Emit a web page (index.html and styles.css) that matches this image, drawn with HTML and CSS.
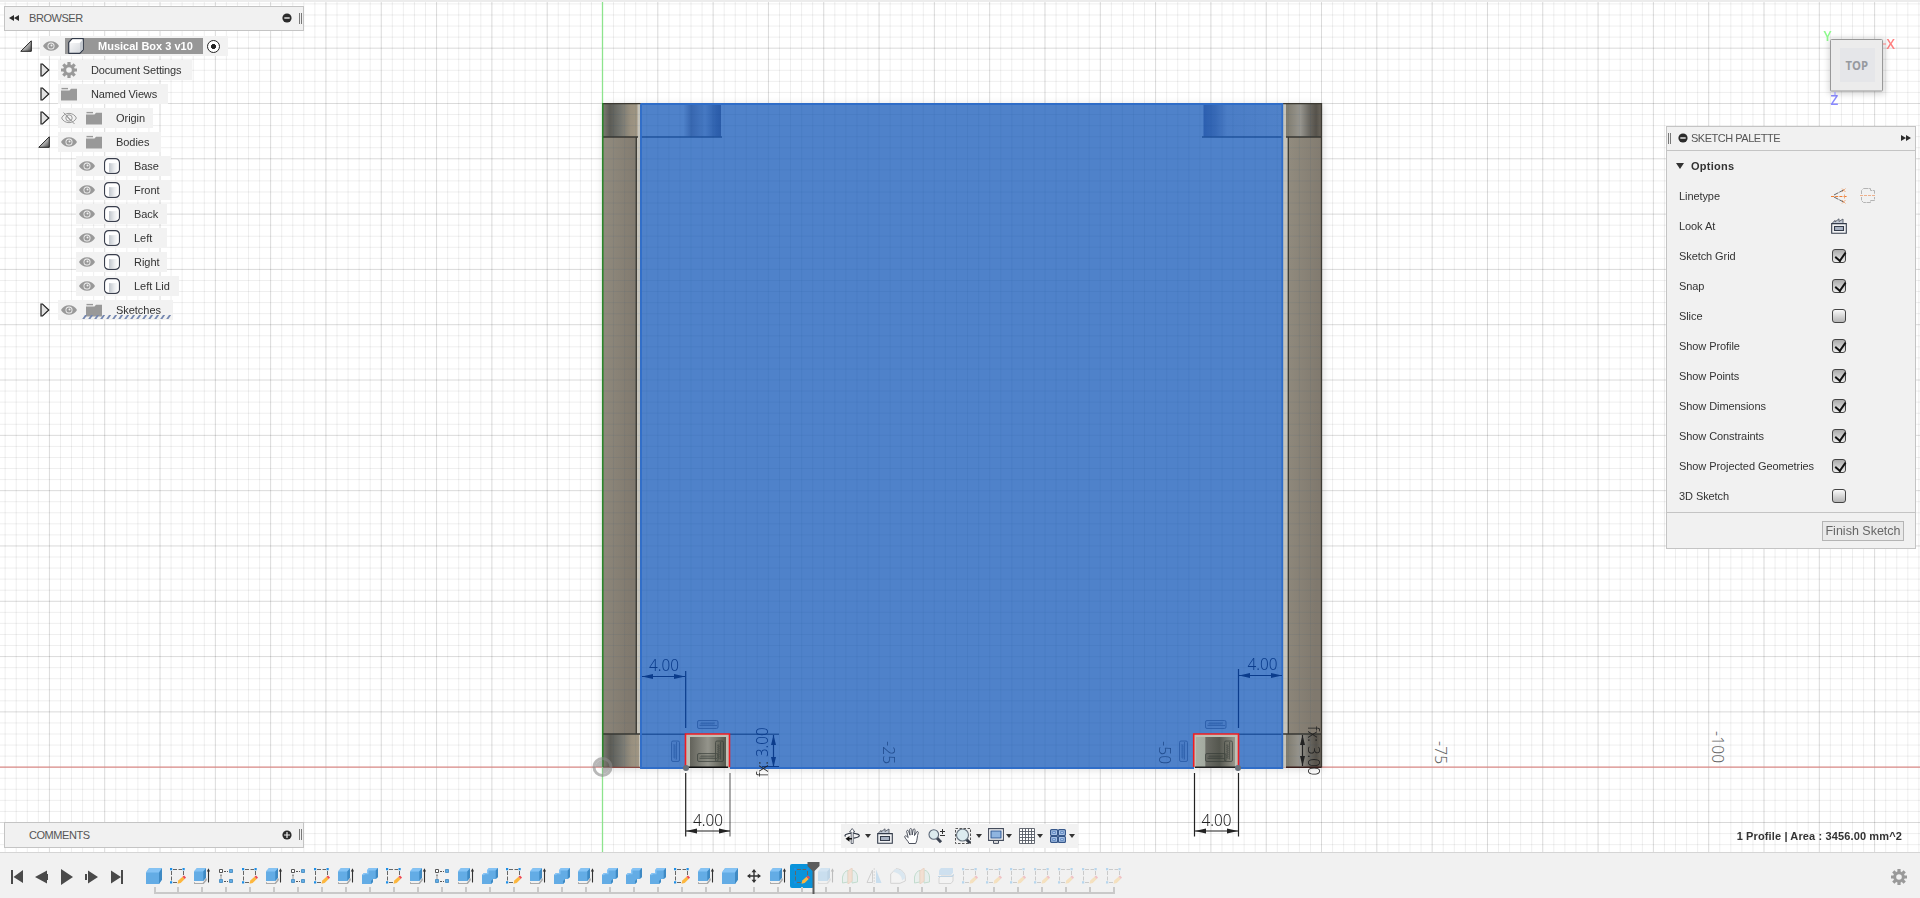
FILE: index.html
```html
<!DOCTYPE html>
<html lang="en">
<head>
<meta charset="utf-8">
<title>Musical Box 3 v10</title>
<link rel="stylesheet" href="styles.css">
</head>
<body>
<svg class="defs" aria-hidden="true">
  <defs>
    <linearGradient id="gTri" x1="0" y1="0" x2="1" y2="1"><stop offset=".3" stop-color="#eee"/><stop offset="1" stop-color="#444"/></linearGradient>
    <linearGradient id="gCyl"><stop offset="0" stop-color="#fff"/><stop offset=".25" stop-color="#fff"/><stop offset=".3" stop-color="#c3c8ce"/><stop offset=".7" stop-color="#eceef0"/><stop offset="1" stop-color="#fff"/></linearGradient>
    <linearGradient id="gBox" x1="0" y1="0" x2="1" y2="1"><stop offset="0" stop-color="#fff"/><stop offset="1" stop-color="#cfd3d8"/></linearGradient>
    <symbol id="eye" viewBox="0 0 16 16"><path d="M0 8C3 1.600 13 1.600 16 8C13 14.400 3 14.400 0 8Z" fill="#999"/><circle cx="8" cy="8" r="3.500" fill="#f2f2f2"/><circle cx="8" cy="8" r="2.600" fill="#999"/><circle cx="8.500" cy="7.500" r="1" fill="#f2f2f2"/></symbol>
    <symbol id="eyeoff" viewBox="0 0 16 16"><g fill="none" stroke="#999"><path d="M.6 8C3.500 1.800 12.500 1.800 15.400 8C12.500 14.200 3.500 14.200.6 8Z"/><circle cx="8" cy="8" r="3.200"/><path d="M2.500 2.500l11 11.500M5.500 6l4 4.500" /></g></symbol>
    <symbol id="folder" viewBox="0 0 16 16"><path d="M0 4.500h8.500l1.500-1.800h6v11.800H0Z" fill="#999"/><path d="M.5 2.600h6.500" stroke="#999" stroke-width="1.400"/></symbol>
    <symbol id="gear" viewBox="0 0 16 16"><circle cx="8" cy="8" r="4.300" fill="none" stroke="#999" stroke-width="3"/><g stroke="#999" stroke-width="3.200"><path d="M8 0v3M8 13v3M0 8h3M13 8h3M2.300 2.300l2 2M11.700 11.700l2 2M2.300 13.700l2-2M11.700 4.300l2-2"/></g></symbol>
    <symbol id="body" viewBox="0 0 16 16"><rect x=".6" y=".6" width="14.800" height="14.800" rx="4" fill="#fff" stroke="#3a3f4d" stroke-width="1.200"/><path d="M1.500 4.500Q8 6 14.500 4.500v8Q13 14.500 8 14.500T1.500 12.500Z" fill="url(#gCyl)"/></symbol>
    <symbol id="comp" viewBox="0 0 16 16"><path d="M.7 4.500L4.200.700H15.300V11.500L11.800 15.300H.7Z" fill="url(#gBox)" stroke="#333b4a" stroke-width="1.200" stroke-linejoin="round"/><path d="M1.500 5L4.600 1.400H14.400L11.500 5Z" fill="#fff"/><path d="M12 5L14.800 2v9.200L12 14.300Z" fill="#c4c9d0"/></symbol>
    <symbol id="open" viewBox="0 0 12 12"><path d="M.8 11.300L11.300.800V11.300Z" fill="url(#gTri)" stroke="#222" stroke-width="1"/></symbol>
    <symbol id="shut" viewBox="0 0 10 14"><path d="M1 1H2.500L8.800 7L2.500 13H1Z" fill="#e2e2e2" stroke="#222" stroke-width="1.200"/></symbol>
    <symbol id="minus" viewBox="0 0 10 10"><circle cx="5" cy="5" r="4.600" fill="#2b2b2b"/><path d="M2.300 5h5.400" stroke="#f0f0f0" stroke-width="1.400"/></symbol>
    <symbol id="plus" viewBox="0 0 10 10"><circle cx="5" cy="5" r="4.600" fill="#2b2b2b"/><path d="M2 5h6M5 2v6" stroke="#f0f0f0" stroke-width="1.200"/></symbol>
    <symbol id="ff" viewBox="0 0 10 6"><path d="M0 0l5 3-5 3ZM5 0l5 3-5 3Z" fill="#2b2b2b"/></symbol>
    <symbol id="lookat" viewBox="0 0 16 16"><path d="M1 5.500L4 2.300V4L8 .800V3.500L12 1V4.500L13 5.500Z" fill="#c3cad6" stroke="#555b68" stroke-width=".9"/><path d="M.7 5.600H15.300V15.300H.7Z" fill="#f3f4f6" stroke="#333b4a" stroke-width="1.100"/><path d="M3.500 8.500H12.500V12.500H3.500Z" fill="#a9b3c4" stroke="#333b4a" stroke-width="1.100"/></symbol>
    <symbol id="constr" viewBox="0 0 16 16"><path d="M3 7L13.500 1.500M3 9L13.500 14.500" stroke="#666" fill="none" stroke-dasharray="5 1"/><path d="M0 8.500h16" stroke="#ef7d32" stroke-width="1.200" stroke-dasharray="3 1.200"/><path d="M11 .5l3.500 3.500M14.500.5l-3.500 3.500M11 12l3.500 3.500M14.500 12l-3.500 3.500M13.500 6.500v4" stroke="#ef9c66" stroke-width=".8"/></symbol>
    <symbol id="center" viewBox="0 0 16 16"><path d="M3.500.5H10.500V2.500H14.500V12.500H10.500V14.500H3.500L1.500 12.500V2.500Z" fill="none" stroke="#b4b4b4" stroke-dasharray="5 .6"/><path d="M1 7.500H15" stroke="#f1f1f1" stroke-width="3"/><path d="M0 7.500h16" stroke="#edb08c" stroke-dasharray="3 1"/></symbol>
    <symbol id="orbit" viewBox="0 0 16 16"><path d="M1.500 8.500C-.5 6.500 4 5.300 8 5.300S16.500 6.500 15 8.300C14 9.700 11 10 9.500 10.200" fill="none" stroke="#2e3542" stroke-width="1.100"/><path d="M7.200 15.500V4H5.500L8.200.500 10.800 4H9.200V15.500Z" fill="#fff" stroke="#3b4350" stroke-width=".8"/><path d="M1.500 10.800L5.500 8v2H8v1.600H5.500v2.200Z" fill="#111"/></symbol>
    <symbol id="hand" viewBox="0 0 16 16"><path d="M5 15.500C4 12.500 1 10.800.6 8.500C1.500 7 3 8.500 4.200 9.600L2.600 3.300C3 1.800 4.300 2.200 4.700 3.400L6 7.200 5.700 1.400C6.200.1 7.500.3 7.800 1.600L8.200 7 9.200 1.600C10 .6 11.200 1 11.100 2.300L10.500 7.500 12.700 3.800C13.700 3.100 14.700 3.900 14.200 5.100C13 8 13.600 12 11.700 15.500Z" fill="#fff" stroke="#434955" stroke-width=".95"/></symbol>
    <symbol id="zoomi" viewBox="0 0 18 16"><path d="M8.500 9.500L13 14.200" stroke="#3c4452" stroke-width="3"/><circle cx="5.800" cy="6.500" r="4.800" fill="#dcebef" stroke="#5c6878" stroke-width="1.100"/><path d="M12 3.500h5M14.500 1v5M12 7.500h5" stroke="#333" stroke-width="1"/></symbol>
    <symbol id="zoomw" viewBox="0 0 16 16"><path d="M.5.500H15.500V15.500H.5Z" fill="none" stroke="#555" stroke-dasharray="2.500 1.500"/><path d="M11 11L15 15" stroke="#343c4a" stroke-width="3"/><circle cx="7.500" cy="7" r="6" fill="#dcebef" stroke="#68747f" stroke-width="1.100"/></symbol>
    <symbol id="disp" viewBox="0 0 16 16"><path d="M.6.600H15.400V12.400H.6Z" fill="#fff" stroke="#444c5c" stroke-width="1.100"/><path d="M3 3h10v7H3Z" fill="#8fb4e0" stroke="#365d96" stroke-width="1.100"/><path d="M5.500 12.500h5V15.400h-5Z" fill="#ddd" stroke="#444c5c"/></symbol>
    <symbol id="gridi" viewBox="0 0 16 16"><path d="M.5.500H15.500V15.500H.5Z" fill="#fff"/><path d="M.5.500H15.500V15.500H.5ZM3.500.500v15M6.500.500v15M9.500.500v15M12.500.500v15M.5 3.500h15M.5 6.500h15M.5 9.500h15M.5 12.500h15" fill="none" stroke="#565b65" stroke-width=".9"/></symbol>
    <symbol id="views" viewBox="0 0 16 14"><g fill="#a9c3e6" stroke="#36578a" stroke-width="1.200"><rect x=".6" y=".6" width="7" height="6" rx="1"/><rect x="8.400" y=".6" width="7" height="6" rx="1"/><rect x=".6" y="7.400" width="7" height="6" rx="1"/><rect x="8.400" y="7.400" width="7" height="6" rx="1"/></g><path d="M2.500 2.500h3v2h-3ZM10.500 2.500h3v2h-3ZM2.500 9.500h3v2h-3ZM10.500 9.500h3v2h-3Z" fill="none" stroke="#6b91c7"/></symbol>
    <symbol id="t-box" viewBox="0 0 16 16"><path d="M0 4.500L3 .3H16V11.500L13 16H0Z" fill="#63ace5"/><path d="M0 4.500L3 .3H16L13 4.500Z" fill="#85c3f5"/><path d="M13 4.500L16 .3V11.500L13 16Z" fill="#3f8ac4"/></symbol>
    <symbol id="t-extrude" viewBox="0 0 16 16"><path d="M0 14v1.700H9L12 12V10.500" fill="none" stroke="#aaa" stroke-width="1.600"/><path d="M0 3.500L2.800.300H12V9.500L9.300 13H0Z" fill="#63ace5"/><path d="M0 3.500L2.800.300H12L9.300 3.500Z" fill="#85c3f5"/><path d="M9.300 3.500L12 .3V9.500L9.300 13Z" fill="#3f8ac4"/><path d="M14.500 14.500V2" stroke="#333" stroke-width="1.100"/><path d="M12.800 3.500L14.500.300L16 3.500Z" fill="#333"/></symbol>
    <symbol id="t-sketch" viewBox="0 0 16 16"><path d="M3 1.500H12M1.500 3V13M13.500 3V8M3 14.500H8" fill="none" stroke="#666" stroke-dasharray="4 1.500"/><path d="M0 0h2.200v2.200H0ZM12.500 0h2.200v2.200h-2.200ZM0 13.300h2.200v2.200H0Z" fill="#1d8fe8"/><path d="M7.500 15.700L8.300 12.500 12.500 8.700 14.700 11 10.700 15Z" fill="#fdb73e"/><path d="M12.500 8.700L14 7.500 16 9.500 14.700 11Z" fill="#ef4752"/></symbol>
    <symbol id="t-pattern" viewBox="0 0 16 16"><path d="M6 3.500h4M3 6.500v4M6 13.500h4" stroke="#555" stroke-width="1.100" stroke-dasharray="2 1"/><path d="M1.500 1.500h3v3h-3Z" fill="#fff" stroke="#555"/><path d="M11.500 1.500h3v3h-3ZM1.500 11.500h3v3h-3ZM11.500 11.500h3v3h-3Z" fill="#63ace5" stroke="#3c86be" stroke-width=".8"/></symbol>
    <symbol id="t-combine" viewBox="0 0 16 16"><path d="M0 7L2 5H5V2.200L7 0H16V9L13.700 11H11V14L9 16H0Z" fill="#63ace5"/><path d="M0 7L2 5H5V2.200L7 0H16L13.700 2.500H6.500V6.300H3L2 7.200Z" fill="#85c3f5"/><path d="M13.700 2.500L16 0V9L13.700 11ZM9 13L11 11V14L9 16Z" fill="#3f8ac4"/></symbol>
    <symbol id="t-move" viewBox="0 0 16 16"><path d="M8 2v12M2 8h12" stroke="#333" stroke-width="1.400"/><path d="M8 1l2.500 3.300H5.500ZM8 15l2.500-3.300H5.500ZM1 8l3.300-2.500v5ZM15 8l-3.300-2.500v5Z" fill="#333"/></symbol>
    <symbol id="t-loft" viewBox="0 0 16 16"><path d="M.5 15V9Q2 3 6 2.500V14Z" fill="#d5e9e2" stroke="#4ba574"/><path d="M10 2Q15 3 15.500 9V14L10 15Z" fill="#c9e7e0" stroke="#4ba574"/><path d="M6 3L10 0V13L6 16Z" fill="#f4b183" stroke="#dc8955"/></symbol>
    <symbol id="t-mirror" viewBox="0 0 16 16"><path d="M6.500 2V14.500H1Z" fill="none" stroke="#777"/><path d="M10 1.500V15H15.500Z" fill="#63ace5"/><path d="M8.200 0V16" stroke="#999" stroke-dasharray="2 1"/></symbol>
    <symbol id="t-fillet" viewBox="0 0 16 16"><path d="M.7 6L6 .7C12 1 15.300 5 15.300 10V13L10 15.300H.7Z" fill="#f6f6f6" stroke="#888"/><path d="M5.500 1C11 1 15 4.500 15.300 10L12 12.500C12 8 8.500 4.500 3 4Z" fill="#9fcbee"/></symbol>
    <symbol id="t-split" viewBox="0 0 16 16"><path d="M1 2.500L3 0H15V4.500L13 7H1Z" fill="#72b5e8"/><path d="M1 10L3 8H15V13L13 15.500H1Z" fill="#f7f7f7" stroke="#8b8b8b"/><path d="M0 8.500h14l2-2" stroke="#3f8ac4" fill="none" stroke-width="1.200"/></symbol>
    <symbol id="hz" viewBox="0 0 22 9"><rect x=".5" y=".5" width="20.500" height="8" rx="1.500" fill="currentColor" fill-opacity=".1" stroke="currentColor" stroke-width=".9"/><path d="M2.500 5.500H20M3 4.500l2-2v2l2-2v2l2-2v2l2-2v2l2-2v2l2-2v2l2-2v2" fill="none" stroke="currentColor" stroke-width=".8"/></symbol>
  </defs>
</svg>

<main class="viewport">
  <svg class="scene" width="1920" height="852" viewBox="0 0 1920 852">
    <defs>
      <linearGradient id="postL"><stop offset="0" stop-color="#7d7b71"/><stop offset=".2" stop-color="#5c5c56"/><stop offset=".5" stop-color="#74756f"/><stop offset=".8" stop-color="#99907f"/><stop offset="1" stop-color="#a09684"/></linearGradient>
      <linearGradient id="postR"><stop offset="0" stop-color="#7f7b6e"/><stop offset=".4" stop-color="#98968f"/><stop offset=".65" stop-color="#6c6962"/><stop offset=".85" stop-color="#56524b"/><stop offset="1" stop-color="#6c675d"/></linearGradient>
      <linearGradient id="wallL" x1="0" y1="0" x2="1" y2=".4"><stop offset="0" stop-color="#928c7f"/><stop offset="1" stop-color="#80796e"/></linearGradient>
      <linearGradient id="peg"><stop offset="0" stop-color="#63635b"/><stop offset=".5" stop-color="#94948b"/><stop offset="1" stop-color="#55564b"/></linearGradient>
      <linearGradient id="pegR"><stop offset="0" stop-color="#aab1a6"/><stop offset=".23" stop-color="#a4aaa0"/><stop offset=".25" stop-color="#6b6c65"/><stop offset=".6" stop-color="#55574f"/><stop offset="1" stop-color="#98968b"/></linearGradient>
      <linearGradient id="tabL"><stop offset="0" stop-color="#4f82ca"/><stop offset=".53" stop-color="#4f82ca"/><stop offset=".63" stop-color="#3867b0"/><stop offset=".8" stop-color="#4679c3"/><stop offset=".94" stop-color="#2f61ae"/><stop offset="1" stop-color="#2a5ba8"/></linearGradient>
      <linearGradient id="tabR"><stop offset="0" stop-color="#2c5fb0"/><stop offset=".15" stop-color="#3769b6"/><stop offset=".3" stop-color="#4b7dc6"/><stop offset="1" stop-color="#5082c9"/></linearGradient>
      <filter id="soft" x="-5%" y="-5%" width="110%" height="110%"><feGaussianBlur stdDeviation="4"/></filter>
    </defs>
    <rect width="1920" height="852" fill="#fff"/>
    <path class="minor" data-grid="minor"/>
    <path class="major" data-grid="major"/>
    <path d="M0 767.200H1920" stroke="#df8f8c" stroke-width="1.300"/>
    <path d="M602.500 2V852" stroke="#8de48d" stroke-width="1.300"/>
    <rect x="603" y="105" width="720" height="664" fill="#000" opacity=".15" filter="url(#soft)"/>
    <g>
      <rect x="602.500" y="103.500" width="719" height="664" fill="#c5c3ba"/>
      <rect x="603" y="137" width="33" height="597" fill="url(#wallL)"/>
      <rect x="1288" y="137" width="33.500" height="597" fill="url(#wallL)"/>
      <rect x="603" y="104" width="34.500" height="33" fill="url(#postL)"/>
      <rect x="603" y="734" width="36" height="33" fill="url(#postL)"/>
      <rect x="1286" y="104" width="35.500" height="33" fill="url(#postR)"/>
      <rect x="1286" y="734" width="35.500" height="33" fill="url(#postR)"/>
      <path d="M636.300 137V734M1288.300 137V734M603 137H638M1286 137H1321.500M603 734H640M1283 734H1321.500M603 103.600H1321.500M1321.500 103V767.500" fill="none" stroke="#3b3932" stroke-width="1.300"/>
      <path d="M602.800 103V767" stroke="#1f7f1e" stroke-width="1.400"/>
      <path d="M603 767.300H640" stroke="#7b312b"/><path d="M1286 767.300H1321.500" stroke="#3a1d1a" stroke-width="1.400"/>
      <path d="M640 103.500H1283V768.500H1238.500V734H1193.500V768.500H730V734H685.500V768.500H640Z" fill="#4f82ca"/>
      <rect x="641" y="104.500" width="80" height="32.500" fill="url(#tabL)"/>
      <rect x="1203.500" y="104.500" width="79" height="32.500" fill="url(#tabR)"/>
      <path d="M641 137H722M1202 137H1282M641 734.300H686M730 734.300H779M1238 734.300H1282" stroke="#2355a0" stroke-width="1.500"/>
      <path class="through" data-grid="box"/>
      <path d="M641 104V768H686M730 768H1194M1238 768H1282.300V104H641" fill="none" stroke="#2f6dc8" stroke-width="1.800"/>
    </g>
    <g>
      <rect x="686" y="734" width="44" height="33.500" fill="#bfc0b5"/><rect x="690" y="737" width="36" height="30" fill="url(#peg)"/>
      <path d="M688 767.300H728" stroke="#111" stroke-width="1.500"/>
      <path d="M685.500 767V734H729.500V767" fill="none" stroke="#f11c22" stroke-width="1.600"/>
      <rect x="1194" y="734" width="44" height="33.500" fill="#bfc0b5"/><rect x="1196" y="737" width="39" height="30" fill="url(#pegR)"/>
      <path d="M1195 767.300H1238" stroke="#222" stroke-width="1.400"/>
      <path d="M1193.700 767V734H1238.500V767" fill="none" stroke="#f11c22" stroke-width="1.600"/>
      <circle cx="686" cy="768" r="3" fill="#67707a"/><circle cx="1238" cy="768" r="3" fill="#67707a"/>
    </g>
    <g color="#1d4f9c" opacity=".7">
      <use href="#hz" x="697" y="720" width="22" height="9"/><use href="#hz" x="1205" y="720" width="22" height="9"/>
      <use href="#hz" width="22" height="9" transform="translate(671 762) rotate(-90)"/>
      <use href="#hz" width="22" height="9" transform="translate(1179 762) rotate(-90)"/>
    </g>
    <g color="#333a35" opacity=".7">
      <use href="#hz" x="697" y="753" width="22" height="9"/><use href="#hz" x="1205" y="753" width="22" height="9"/>
      <use href="#hz" width="22" height="9" transform="translate(715 762) rotate(-90)"/>
      <use href="#hz" width="22" height="9" transform="translate(1224 762) rotate(-90)"/>
    </g>
    <g class="dim-blue">
      <path d="M685.700 671V728M642 676.500H685M1238.500 669V728M1239 675.500H1282M773.500 735V767M762 766.500H779"/>
      <path class="head" d="M642 676.500l11-2.500v5ZM685 676.500l-11-2.500v5ZM1239 675.500l11-2.500v5ZM1282 675.500l-11-2.500v5ZM773.500 735l-2.500 10h5ZM773.500 767l-2.500-10h5Z"/>
      <text x="649" y="671" textLength="30" lengthAdjust="spacingAndGlyphs">4.00</text>
      <text x="1247.500" y="670" textLength="30" lengthAdjust="spacingAndGlyphs">4.00</text>
      <text transform="translate(768 757) rotate(-90)" textLength="29.500" lengthAdjust="spacingAndGlyphs">3.00</text>
    </g>
    <g class="dim-dark">
      <path d="M685.700 773V836.500M1194.500 773V836.500M1238.500 773V836.500M686 831H730M1195 831H1238M1302.500 735V766"/>
      <path d="M730 773V836.500" opacity=".65"/>
      <path class="head" d="M686 831l11-2.500v5ZM730 831l-11-2.500v5ZM1195 831l11-2.500v5ZM1238 831l-11-2.500v5ZM1302.500 735l-2.500 10h5ZM1302.500 766l-2.500-10h5Z"/>
      <text x="693" y="825.500" textLength="30" lengthAdjust="spacingAndGlyphs">4.00</text>
      <text x="1201.500" y="825.500" textLength="30" lengthAdjust="spacingAndGlyphs">4.00</text>
      <text transform="translate(768 777) rotate(-90)" textLength="16" lengthAdjust="spacingAndGlyphs">fx:</text>
      <text transform="translate(1308 726) rotate(90)" textLength="49.500" lengthAdjust="spacingAndGlyphs">fx: 3.00</text>
    </g>
    <g class="ruler">
      <text class="in" transform="translate(883 741) rotate(90)" textLength="23">-25</text>
      <text class="in" transform="translate(1159 741) rotate(90)" textLength="23">-50</text>
      <text transform="translate(1435 741) rotate(90)" textLength="23">-75</text>
      <text transform="translate(1711.500 731) rotate(90)" textLength="32">-100</text>
    </g>
    <circle cx="602.500" cy="767" r="8.500" fill="none" stroke="#888" stroke-opacity=".6" stroke-width="3"/>
    <path d="M602.500 767V760a7 7 0 0 0-7 7ZM602.500 767v7a7 7 0 0 0 7-7Z" fill="#888" fill-opacity=".6"/>
    <rect width="1920" height="2" fill="#ececec"/>
  </svg>

  <section class="browser">
    <header class="bar">
      <svg class="ff flip"><use href="#ff"/></svg><span class="bar-title">BROWSER</span>
      <svg class="knob"><use href="#minus"/></svg><i class="grip"></i>
    </header>
    <ul class="tree">
      <li class="root"><svg class="tri"><use href="#open"/></svg><div class="chip w-root"><svg class="ic"><use href="#eye"/></svg><b class="active"><svg class="ic"><use href="#comp"/></svg>Musical Box 3 v10</b><i class="radio"></i></div></li>
      <li class="l1"><svg class="tri shut"><use href="#shut"/></svg><div class="chip w-doc"><svg class="ic"><use href="#gear"/></svg><span>Document Settings</span></div></li>
      <li class="l1"><svg class="tri shut"><use href="#shut"/></svg><div class="chip w-views"><svg class="ic"><use href="#folder"/></svg><span>Named Views</span></div></li>
      <li class="l1"><svg class="tri shut"><use href="#shut"/></svg><div class="chip w-origin"><svg class="ic"><use href="#eyeoff"/></svg><svg class="ic"><use href="#folder"/></svg><span>Origin</span></div></li>
      <li class="l1"><svg class="tri"><use href="#open"/></svg><div class="chip w-bodies"><svg class="ic"><use href="#eye"/></svg><svg class="ic"><use href="#folder"/></svg><span>Bodies</span></div></li>
      <li class="l2"><div class="chip w-m"><svg class="ic"><use href="#eye"/></svg><svg class="ic"><use href="#body"/></svg><span>Base</span></div></li>
      <li class="l2"><div class="chip w-m"><svg class="ic"><use href="#eye"/></svg><svg class="ic"><use href="#body"/></svg><span>Front</span></div></li>
      <li class="l2"><div class="chip w-s"><svg class="ic"><use href="#eye"/></svg><svg class="ic"><use href="#body"/></svg><span>Back</span></div></li>
      <li class="l2"><div class="chip w-s"><svg class="ic"><use href="#eye"/></svg><svg class="ic"><use href="#body"/></svg><span>Left</span></div></li>
      <li class="l2"><div class="chip w-s"><svg class="ic"><use href="#eye"/></svg><svg class="ic"><use href="#body"/></svg><span>Right</span></div></li>
      <li class="l2"><div class="chip w-l"><svg class="ic"><use href="#eye"/></svg><svg class="ic"><use href="#body"/></svg><span>Left Lid</span></div></li>
      <li class="l1"><svg class="tri shut"><use href="#shut"/></svg><div class="chip w-sk"><svg class="ic"><use href="#eye"/></svg><svg class="ic"><use href="#folder"/></svg><span>Sketches</span><svg class="hatch" viewBox="0 0 89 4"><path d="M0 2H89" stroke="#7487b0" stroke-width="4" stroke-dasharray="2.200 3.800" transform="skewX(-35) translate(3 0)"/></svg></div></li>
    </ul>
  </section>

  <section class="comments bar">
    <span class="bar-title">COMMENTS</span><svg class="knob"><use href="#plus"/></svg><i class="grip"></i>
  </section>

  <svg class="cube" width="80" height="90" viewBox="1820 25 80 90">
    <defs><filter id="cubeblur" x="-20%" y="-20%" width="140%" height="140%"><feGaussianBlur stdDeviation="3"/></filter></defs>
    <g class="axis"><text x="1823.500" y="41" fill="#8dfa8d">Y</text><text x="1886.500" y="48.500" fill="#ff8080">X</text><text x="1830.500" y="105" fill="#8a8aff">Z</text></g>
    <rect x="1829" y="39" width="56" height="55" fill="#000" opacity=".16" filter="url(#cubeblur)"/>
    <rect x="1830.500" y="39.500" width="52" height="51.500" rx="1" fill="#ececec" stroke="#999"/>
    <rect x="1840" y="48" width="35" height="34" fill="#e5e6e9"/>
    <text class="face" x="1845.500" y="70" textLength="22.500" lengthAdjust="spacingAndGlyphs">TOP</text>
    <path d="M1883 44h3" stroke="#ff8080"/><path d="M1835 92v4" stroke="#8a8aff"/>
  </svg>

  <section class="palette">
    <header><i class="grip"></i><svg class="knob"><use href="#minus"/></svg><span>SKETCH PALETTE</span><svg class="ff"><use href="#ff"/></svg></header>
    <h2><i class="caret"></i>Options</h2>
    <div class="opt"><span>Linetype</span><svg class="ic"><use href="#constr"/></svg><svg class="ic second"><use href="#center"/></svg></div>
    <div class="opt"><span>Look At</span><svg class="ic"><use href="#lookat"/></svg></div>
    <div class="opt"><span>Sketch Grid</span><i class="check on"></i></div>
    <div class="opt"><span>Snap</span><i class="check on"></i></div>
    <div class="opt"><span>Slice</span><i class="check"></i></div>
    <div class="opt"><span>Show Profile</span><i class="check on"></i></div>
    <div class="opt"><span>Show Points</span><i class="check on"></i></div>
    <div class="opt"><span>Show Dimensions</span><i class="check on"></i></div>
    <div class="opt"><span>Show Constraints</span><i class="check on"></i></div>
    <div class="opt"><span>Show Projected Geometries</span><i class="check on"></i></div>
    <div class="opt"><span>3D Sketch</span><i class="check"></i></div>
    <footer><button>Finish Sketch</button></footer>
  </section>

  <nav class="navbar">
    <svg class="ic"><use href="#orbit"/></svg><i class="caret c1"></i>
    <svg class="ic lk"><use href="#lookat"/></svg>
    <svg class="ic hd"><use href="#hand"/></svg>
    <svg class="ic zi"><use href="#zoomi"/></svg>
    <svg class="ic zw"><use href="#zoomw"/></svg><i class="caret c2"></i>
    <svg class="ic dp"><use href="#disp"/></svg><i class="caret c3"></i>
    <svg class="ic gr"><use href="#gridi"/></svg><i class="caret c3"></i>
    <svg class="ic vw"><use href="#views"/></svg><i class="caret c4"></i>
  </nav>
  <p class="status">1 Profile | Area : 3456.00 mm^2</p>
</main>

<footer class="timeline">
  <svg class="player" width="124" height="16" viewBox="0 0 124 16" fill="#4a4a4a">
    <path d="M0 1h2v14H0ZM12 1v13L2.500 8ZM36 1.500v13L24 8ZM35 5h2v6h-2ZM50 0L62 8L50 16ZM74 5h2v6h-2ZM77 1.500L87 8L77 14.500ZM100 1.500L110 8L100 14.500ZM110 1h2v14h-2Z"/>
  </svg>
  <div class="track"></div>
  <svg class="ic settings"><use href="#gear"/></svg>
</footer>
<script src="app.js"></script>
</body>
</html>
```

FILE: styles.css
```css
* { box-sizing: border-box; }
html, body { margin: 0; height: 100%; }
body { display: flex; flex-direction: column; height: 898px; overflow: hidden; background: #fff; color: #333; font: 11px/14px "Liberation Sans", Arial, sans-serif; }
.defs { position: absolute; width: 0; height: 0; }
svg { flex: none; display: block; }
.ic { width: 16px; height: 16px; }

.viewport { position: relative; flex: none; height: 852px; overflow: hidden; }
.minor { fill: none; stroke: #000; stroke-opacity: .065; }
.major { fill: none; stroke: #000; stroke-opacity: .085; }
.through { fill: none; stroke: #14407f; stroke-opacity: .06; }
.scene text { font-family: "Noto Sans", "Open Sans", sans-serif; font-weight: 300; font-size: 15.5px; }
.dim-blue path, .dim-dark path { fill: none; stroke: #0b3c8c; stroke-width: 1.2; }
.dim-dark path { stroke: #222; }
.dim-blue .head, .dim-blue text { fill: #0b3c8c; stroke: none; }
.dim-dark .head, .dim-dark text { fill: #222; stroke: none; }
.ruler text { fill: #666; }
.ruler .in { fill: #234f91; }

.bar { display: flex; align-items: center; width: 300px; height: 25px; padding: 0 1px 1px 24px; background: #f1f1f1; border: 1px solid #c4c4c4; color: #555; }
.bar-title { flex: 1; font-size: 11px; letter-spacing: -.45px; }
.ff { width: 10px; height: 6px; }
.flip { transform: scaleX(-1); margin: 0 10px 0 -20px; }
.knob { width: 10px; height: 10px; }
.grip { width: 3px; height: 11px; margin-left: 7px; border: solid #777; border-width: 0 1px; }
.bar .knob { margin-right: 0; }

.browser { position: absolute; left: 4px; top: 6px; width: 300px; }
.tree { margin: 3px 0 0; padding: 0; list-style: none; }
.tree li { display: flex; align-items: center; height: 24px; }
.tri { width: 12px; height: 12px; }
.tri.shut { width: 10px; height: 14px; margin-right: 2px; }
.root { padding-left: 16px; }
.root .tri { margin-right: 8px; }
.l1 { padding-left: 34px; }
.l1 .tri { margin-right: 8px; }
.l1 .tri.shut { margin: 0 8px 0 2px; }
.l2 { padding-left: 72px; }
.chip { position: relative; display: flex; align-items: center; height: 20px; padding-left: 3px; background: #f2f2f2; white-space: nowrap; }
.chip .ic + .ic { margin-left: 9px; }
.chip span { margin-left: 14px; letter-spacing: -.04px; }
.w-root { width: 188px; }
.w-doc { width: 134px; }
.w-doc span, .w-views span { letter-spacing: -.15px; }
.w-views { width: 110px; }
.w-origin { width: 95px; }
.w-bodies { width: 103px; }
.w-m { width: 95px; }
.w-s { width: 91px; }
.w-l { width: 103px; }
.w-sk { width: 115px; }
.active { display: flex; align-items: center; gap: 14px; width: 138px; height: 16px; margin-left: 6px; padding-left: 3px; background: #979797; color: #fff; }
.radio { width: 13px; height: 13px; margin-left: 4px; border: 1px solid #222; border-radius: 50%; background: radial-gradient(circle, #222 0 2.200px, #fff 2.800px); }
.hatch { position: absolute; left: 24px; bottom: 1px; width: 89px; height: 4px; }

.comments { position: absolute; left: 4px; top: 822px; height: 26px; }

.cube { position: absolute; left: 1820px; top: 25px; }
.cube text { font-family: "Open Sans", "Noto Sans", sans-serif; }
.cube .face { font-size: 13px; font-weight: 700; fill: #979a9f; }
.axis text { font-size: 13.5px; font-weight: 600; }

.palette { position: absolute; left: 1666px; top: 126px; width: 250px; height: 423px; background: #f1f1f1; border: 1px solid #c4c4c4; }
.palette header { display: flex; align-items: center; height: 24px; padding: 0 4px 1px 0; border-bottom: 1px solid #c4c4c4; color: #555; }
.palette header span { flex: 1; margin-left: 3px; letter-spacing: -.48px; }
.palette header .grip { margin: 0 7px 0 1px; }
.palette h2 { display: flex; align-items: center; height: 30px; margin: 0; padding-left: 9px; font-size: 11px; letter-spacing: .25px; }
.caret { width: 0; height: 0; border: solid transparent; border-width: 4px 3px 0; border-top-color: #333; }
.palette .caret { border-width: 6px 4.500px 0; margin-right: 7px; }
.opt { display: flex; align-items: center; height: 30px; padding-left: 12px; }
.opt span { width: 152px; white-space: nowrap; letter-spacing: -.08px; }
.opt .second { margin-left: 13px; }
.check { position: relative; width: 14px; height: 14px; margin-left: 1px; border: 1px solid #444; border-radius: 3px; background: linear-gradient(#fafafa, #b5b5b5); }
.check.on { background: linear-gradient(#aaa, #ededed); }
.check.on::after { content: ""; position: absolute; left: 4px; top: 0; width: 5px; height: 9px; border: solid #111; border-width: 0 2px 2px 0; transform: rotate(35deg) skewY(5deg); }
.palette footer { display: flex; justify-content: flex-end; margin-top: 1px; padding: 8px 11px 0 0; border-top: 1px solid #c4c4c4; }
.palette button { width: 82px; height: 20px; padding: 1px 0 0; border: 1px solid #b4b4b4; background: #e9e9e9; color: #666; font: 12.500px/17px "Liberation Sans", Arial, sans-serif; white-space: nowrap; }

.navbar { position: absolute; left: 841px; top: 824px; display: flex; align-items: center; width: 237px; height: 24px; padding-left: 3px; background: #f2f2f2; }
.c1 { margin-left: 5px; }
.lk { margin-left: 6px; }
.hd { margin-left: 11px; }
.zi { width: 18px; margin-left: 8px; }
.zw { margin-left: 9px; }
.c2 { margin-left: 5px; }
.dp { margin-left: 6px; }
.c3 { margin-left: 2px; }
.gr { margin-left: 7px; }
.vw { height: 14px; margin-left: 7px; }
.c4 { margin-left: 3px; }
.status { position: absolute; right: 18px; top: 829px; margin: 0; font-weight: 700; letter-spacing: .13px; }

.timeline { display: flex; align-items: flex-start; flex: none; height: 46px; padding: 16px 13px 0 11px; background: #f1f1f1; border-top: 1px solid #d5d5d5; }
.player { margin-top: 0; }
.track { display: flex; flex: 1; margin: -6px 0 0 7px; }
.step { position: relative; display: flex; justify-content: center; width: 24px; height: 31px; padding-top: 5px; border-bottom: 2px solid #c9c9c9; }
.step::after { content: ""; position: absolute; left: 11px; top: 24px; width: 2px; height: 6px; background: #c9c9c9; }
.step:first-child { width: 12px; margin-left: 12px; }
.step:first-child .ic { margin-left: -12px; }
.step:first-child::after { left: 0; }
.step:last-child { width: 13px; margin-right: 12px; }
.step:last-child .ic { margin-right: -11px; }
.step.faded .ic { opacity: .28; }
.step.current::before { content: ""; position: absolute; inset: 1px 0 4px; border-radius: 2px; background: #0a93da; }
.step.current .ic { position: relative; }
.marker { position: absolute; left: 17px; top: -1px; z-index: 1; width: 13px; height: 32px; }
.settings { margin-top: 0; }
```

FILE: app.js
```js
// Sketch grid, in scene pixels: one unit is 11.062px, origin at (602.5, 767.2).
const UNIT = 11.062, OX = 602.5, OY = 767.2;

function gridPath(x0, y0, x1, y1, wanted) {
  let d = '';
  for (let i = Math.ceil((x0 - OX) / UNIT); OX + i * UNIT < x1; i++) {
    if (wanted(i)) d += `M${(OX + i * UNIT).toFixed(2)} ${y0}V${y1}`;
  }
  for (let j = Math.ceil((y0 - OY) / UNIT); OY + j * UNIT < y1; j++) {
    if (wanted(j)) d += `M${x0} ${(OY + j * UNIT).toFixed(2)}H${x1}`;
  }
  return d;
}
const set = (name, d) => document.querySelector(`[data-grid=${name}]`).setAttribute('d', d);
set('minor', gridPath(0, 2, 1920, 852, () => true));
set('major', gridPath(0, 2, 1920, 852, n => n % 5 === 0));
set('box', gridPath(603, 104, 1321, 767, () => true));

const steps = ('box sketch extrude pattern sketch extrude pattern sketch extrude combine sketch extrude pattern ' +
  'extrude combine sketch extrude combine extrude combine combine combine sketch extrude box move extrude sketch ' +
  'extrude loft mirror fillet loft split sketch sketch sketch sketch sketch sketch sketch').split(' ');
const CURRENT = 27;
document.querySelector('.track').innerHTML = steps.map((name, i) => {
  const state = i === CURRENT ? ' current' : i > CURRENT ? ' faded' : '';
  const marker = i === CURRENT
    ? '<svg class="marker" viewBox="0 0 13 32"><path d="M.5 0H12.500V4L7.500 9V32H5.500V9L.5 4Z" fill="#5c5c5c"/></svg>' : '';
  return `<div class="step${state}"><svg class="ic"><use href="#t-${name}"/></svg>${marker}</div>`;
}).join('');
```
